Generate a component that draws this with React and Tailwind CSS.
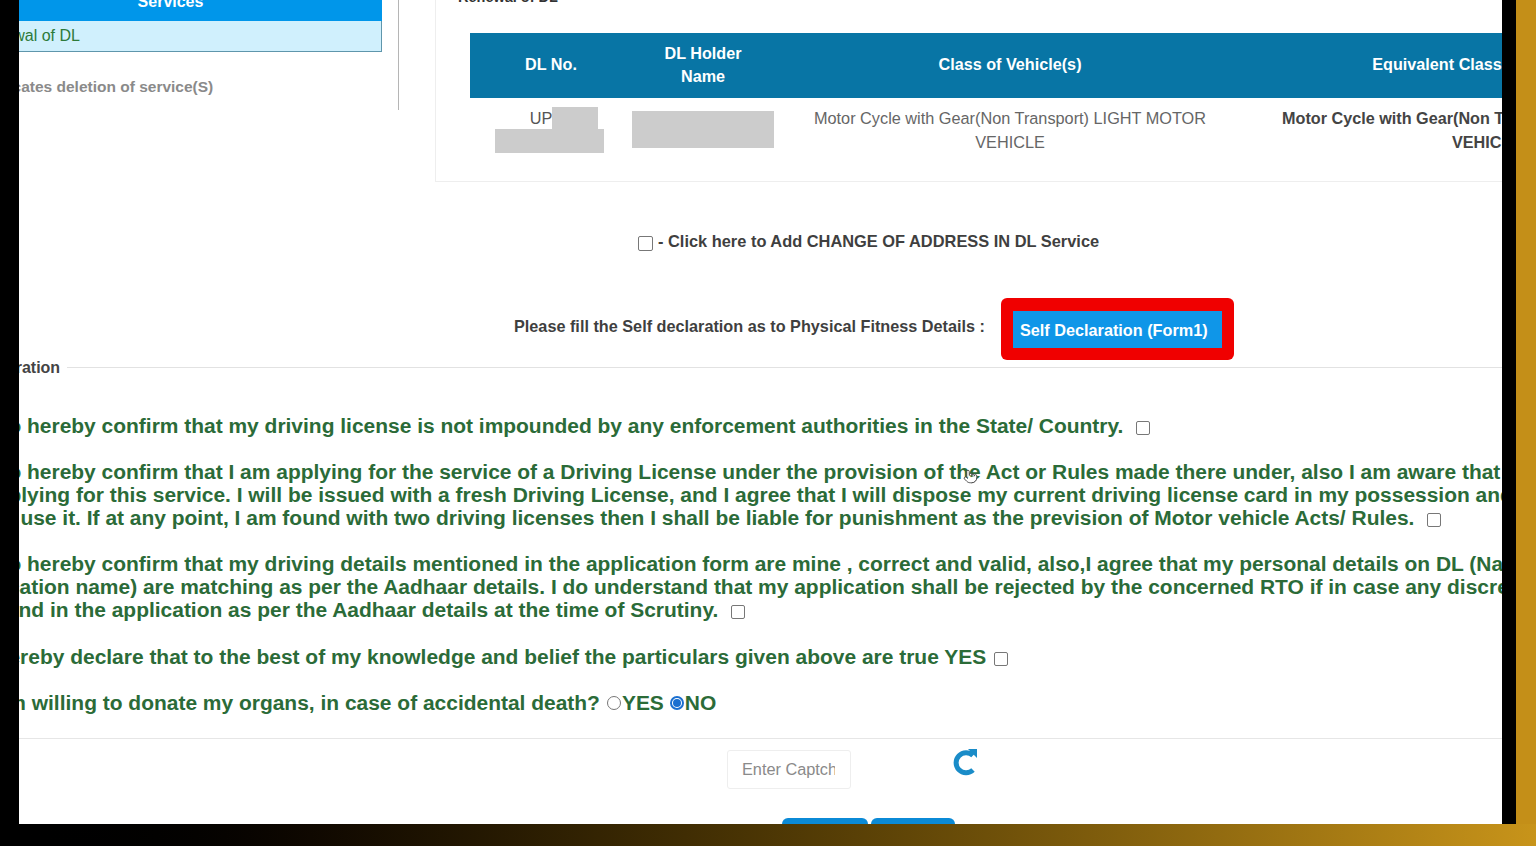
import React from 'react';
import { Pointer } from 'lucide-react';

const CheckBox = ({ gap = 'ml-[13px]' }) => (
  <span className={`inline-block ${gap} w-[14px] h-[14px] align-[-2px] rounded-[2px] border border-[#777] bg-white`}></span>
);

const App = () => {
  return (
    <div className="w-[1536px] h-[846px] overflow-hidden font-['Liberation_Sans',Arial,sans-serif] flex flex-col">
      <div className="flex h-[824px]">
        <div className="w-[19px] bg-black"></div>

        <div className="relative w-[1483px] bg-white overflow-hidden">
          {/* Top row: services + DL table */}
          <div className="flex h-[182px]">
            <div className="w-[380px] h-[110px] border-r border-[#b5b5b5] shrink-0">
              <div className="-ml-[60px] w-[423px]">
                <div className="h-[21px] bg-[#0096ea] text-white text-[16px] font-bold text-center leading-[4px]">Services</div>
                <div className="h-[31px] bg-[#d0f0fd] border-r border-b border-[#5f96ac] pl-[60px] leading-[30px] text-[16px] text-[#2d7a3a] whitespace-nowrap">
                  <span className="-ml-[44px] inline-block">Renewal of DL</span>
                </div>
              </div>
              <p className="mt-[24px] -ml-[34px] text-[15.5px] leading-[22px] font-bold text-[#8a8a8a] whitespace-nowrap">Indicates deletion of service(S)</p>
            </div>

            <div className="ml-[36px] w-[1067px] h-[182px] border-l border-b border-[#eeeeee] pl-[34px] shrink-0">
              <div className="h-[33px] -mt-[14px]">
                <span className="-ml-[12px] block text-[14.5px] leading-[22px] font-bold text-[#333]">Renewal of DL</span>
              </div>
              <div className="mt-[14px] w-[1258px] h-[65px] pb-[2px] grid grid-cols-[162px_142px_472px_482px] items-center bg-[#0875a5] text-center text-white text-[16.2px] font-bold leading-[23px]">
                <div>DL No.</div>
                <div>DL Holder<br />Name</div>
                <div>Class of Vehicle(s)</div>
                <div>Equivalent Class of Vehicle(s)</div>
              </div>
              <div className="w-[1258px] grid grid-cols-[162px_142px_472px_482px] text-center text-[16.3px] leading-[24px] text-[#666]">
                <div className="flex flex-col items-center">
                  <div className="flex mt-[9px] pl-[26px] h-[22px]">
                    <span className="text-[#555] leading-[22px]">UP</span>
                    <span className="w-[46px] h-[22px] bg-[#cccccc]"></span>
                  </div>
                  <span className="w-[109px] h-[24px] bg-[#cccccc] -ml-[4px]"></span>
                </div>
                <div className="flex justify-center">
                  <span className="mt-[13px] w-[143px] h-[37px] bg-[#cccccc]"></span>
                </div>
                <div className="mt-[8px]">Motor Cycle with Gear(Non Transport) LIGHT MOTOR<br />VEHICLE</div>
                <div className="mt-[8px] font-bold text-[16.2px] text-[#444]">Motor Cycle with Gear(Non Transport) LIGHT MOTOR<br />VEHICLE</div>
              </div>
            </div>
          </div>

          {/* Change of address + self declaration */}
          <div className="mt-[49px] ml-[619px] flex items-center h-[20px] text-[16.4px] font-bold text-[#3f3f3f] whitespace-nowrap">
            <span className="w-[15px] h-[15px] mt-[5px] mr-[5px] rounded-[2px] border border-[#777]"></span>
            <span>- Click here to Add CHANGE OF ADDRESS IN DL Service</span>
          </div>
          <div className="mt-[47px] ml-[495px] flex items-center text-[16.24px] font-bold text-[#3f3f3f] whitespace-nowrap">
            <span className="w-[487px] -mt-[6px]">Please fill the Self declaration as to Physical Fitness Details :</span>
            <div className="w-[233px] h-[62px] rounded-[6px] bg-[#f00000] px-[12px] pt-[13px] shrink-0">
              <div className="h-[37px] bg-[#0f96e8] pl-[7px] leading-[39px] text-white">Self Declaration (Form1)</div>
            </div>
          </div>

          {/* Declaration block */}
          <div className="-mt-[4px] flex items-center h-[22px]">
            <span className="-ml-[46px] mt-[2px] text-[16px] font-bold text-[#444] whitespace-nowrap">Declaration</span>
            <div className="ml-[7px] flex-1 border-t border-[#e2e2e2]"></div>
          </div>

          <div className="mt-[36px] text-[20.96px] leading-[23px] font-bold text-[#2b6b38] whitespace-nowrap">
            <p className="-ml-[35px] mb-[23px]">I do hereby confirm that my driving license is not impounded by any enforcement authorities in the State/ Country.<CheckBox /></p>
            <div className="mb-[23px]">
              <p className="-ml-[35px]">I do hereby confirm that I am applying for the service of a Driving License under the provision of the Act or Rules made there under, also I am aware that</p>
              <p className="-ml-[35px]">applying for this service. I will be issued with a fresh Driving License, and I agree that I will dispose my current driving license card in my possession and</p>
              <p className="-ml-[37px]">not use it. If at any point, I am found with two driving licenses then I shall be liable for punishment as the prevision of Motor vehicle Acts/ Rules.<CheckBox /></p>
            </div>
            <div className="mb-[24px]">
              <p className="-ml-[35px]">I do hereby confirm that my driving details mentioned in the application form are mine , correct and valid, also,I agree that my personal details on DL (Name</p>
              <p className="-ml-[60px]">application name) are matching as per the Aadhaar details. I do understand that my application shall be rejected by the concerned RTO if in case any discrepancy</p>
              <p className="-ml-[33px]">found in the application as per the Aadhaar details at the time of Scrutiny.<CheckBox /></p>
            </div>
            <p className="-ml-[35px] mb-[23px]">I hereby declare that to the best of my knowledge and belief the particulars given above are true YES<CheckBox gap="ml-[8px]" /></p>
            <p className="-ml-[35px] flex items-center">
              I am willing to donate my organs, in case of accidental death?
              <span className="ml-[7px] w-[14px] h-[14px] rounded-full border border-[#777]"></span>
              <span className="ml-[1px]">YES</span>
              <span className="ml-[6px] w-[14px] h-[14px] rounded-full border-2 border-[#1a6fd0] flex items-center justify-center">
                <span className="w-[8px] h-[8px] rounded-full bg-[#1a6fd0]"></span>
              </span>
              <span className="ml-[1px]">NO</span>
            </p>
          </div>

          {/* Captcha */}
          <div className="mt-[24px] border-t border-[#e6e6e6] pt-[11px] pl-[708px] flex items-start">
            <input
              placeholder="Enter Captcha"
              className="w-[124px] h-[39px] rounded-[3px] border border-[#eeeeee] pl-[14px] pr-[15px] text-[16.3px] text-[#777] placeholder:text-[#8a8a8a] outline-none"
            />
            <svg className="ml-[101px] -mt-[2px]" width="28" height="30" viewBox="0 0 28 30" fill="none">
              <path d="M21 7.5A10 10 0 1 0 21 22" stroke="#1a8cc8" strokeWidth="5" fill="none" />
              <path d="M16 1h9v9z" fill="#1a8cc8" />
            </svg>
          </div>

          <div className="mt-[29px] ml-[763px] flex gap-[3px]">
            <div className="w-[86px] h-[20px] rounded-t-[6px] bg-[#0b8ad6]"></div>
            <div className="w-[84px] h-[20px] rounded-t-[6px] bg-[#0b8ad6]"></div>
          </div>

          {/* Mouse cursor from the recording */}
          <Pointer className="absolute left-[944px] top-[469px] text-[#444]" size={15} strokeWidth={1.5} fill="white" />
        </div>

        <div className="w-[14px] bg-black"></div>
        <div className="w-[20px] bg-[#c48f18]"></div>
      </div>

      <div className="h-[22px] bg-linear-to-r from-black to-[#c8941a]"></div>
    </div>
  );
};

export default App;
